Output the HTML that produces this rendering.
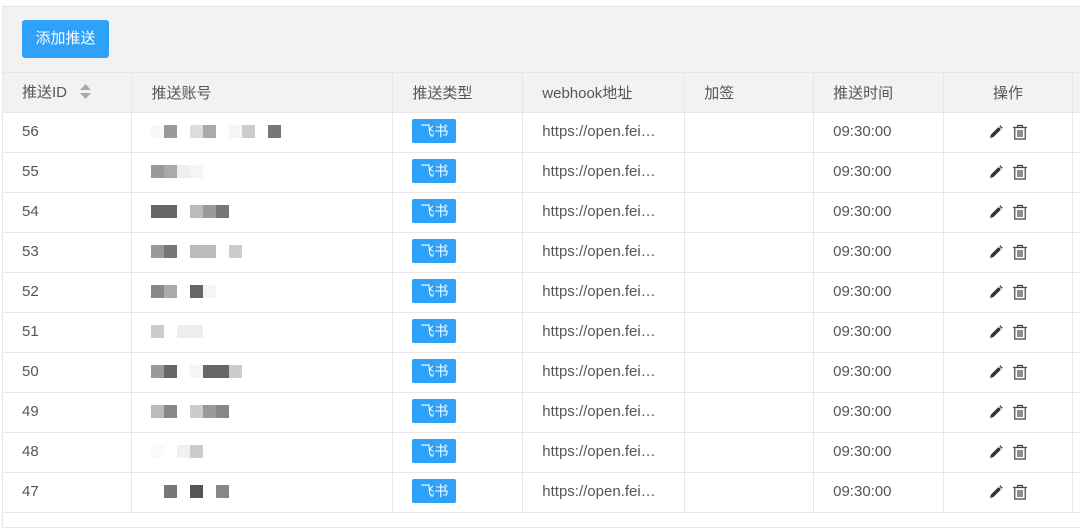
<!DOCTYPE html>
<html><head><meta charset="utf-8"><style>
body{margin:0;width:1080px;height:512px;overflow:hidden;background:#fff;font-family:"Liberation Sans","Noto Sans CJK SC",sans-serif;font-size:15px;color:#555}
.wrap{position:absolute;left:2px;top:6px;width:1090px;height:520px;border:1px solid #e6e6e6;background:#fff}
.bar{height:65px;background:#f2f2f2;position:relative}
.btn{position:absolute;left:19px;top:13px;width:87px;height:38px;background:#2ea1f8;border-radius:3px;color:#fff;font-size:15px;line-height:38px;text-align:center}
table{border-collapse:collapse;table-layout:fixed;position:absolute;left:0;top:65px}
td,th{height:39px;border:1px solid #e6e6e6;padding:0 0 0 19px;text-align:left;font-weight:normal;white-space:nowrap;overflow:hidden}
td{padding-bottom:3px;height:36px}
th{background:#f2f2f2;color:#555;font-size:15px}
tr td:first-child,tr th:first-child{border-left:none}
.tag{display:inline-block;background:#2ea1f8;color:#fff;font-size:14px;width:44px;text-align:center;height:24px;line-height:24px;border-radius:2px}
.op{text-align:center;padding:0 0 3px 0}
.b{display:inline-block;width:13px;height:13px;vertical-align:middle}
.sort{display:inline-block;vertical-align:middle;margin-left:12px}
</style></head><body>
<div class="wrap">
<div class="bar"><div class="btn">添加推送</div></div>
<table>
<colgroup><col style="width:129px"><col style="width:261px"><col style="width:130px"><col style="width:162px"><col style="width:129px"><col style="width:130px"><col style="width:129px"><col style="width:20px"></colgroup>
<tr><th>推送ID<span class="sort"><svg width="13" height="17" viewBox="0 0 13 17"><path d="M6.5 1L12 7H1Z" fill="#aaa"/><path d="M6.5 16L12 10H1Z" fill="#aaa"/></svg></span></th><th>推送账号</th><th>推送类型</th><th>webhook地址</th><th>加签</th><th>推送时间</th><th style="text-align:center;padding:0">操作</th><th></th></tr>
</table>
</div>
<script>
var ids=[56,55,54,53,52,51,50,49,48,47];
var pats=["#f8f8f8 #999 #fff #ddd #aaa #fff #f5f5f5 #ccc #fff #777","#999 #aaa #eee #f5f5f5","#666 #666 #fff #bbb #999 #777","#999 #777 #fff #bbb #bbb #fff #ccc","#888 #aaa #fff #666 #f5f5f5","#ccc #fff #eee #eee","#999 #666 #fff #f5f5f5 #666 #666 #ccc","#bbb #888 #fff #ccc #999 #888","#fafafa #fff #f0f0f0 #ccc","#fff #777 #fff #555 #fff #888"];
var h="";
ids.forEach(function(id,i){
var bl=pats[i].split(" ").map(function(c){return '<span class="b" style="background:'+c+'"></span>'}).join("");
h+='<tr><td>'+id+'</td><td>'+bl+'</td><td><span class="tag">飞书</span></td><td>https://open.fei…</td><td></td><td>09:30:00</td><td class="op"><svg width="14" height="14" viewBox="0 0 14 14" style="vertical-align:middle;margin-right:9px"><path d="M1 13L2 9.5L9.5 2L12 4.5L4.5 12Z" fill="#333"/><path d="M10.3 1.2L11.2 .3L13.7 2.8L12.8 3.7Z" fill="#333"/></svg><svg width="16" height="16" viewBox="0 0 16 16" style="vertical-align:middle"><path d="M1 3.5H15M5.5 3.5V1.5H10.5V3.5M2.8 3.5V15H13.2V3.5M6 6V13M8 6V13M10 6V13" stroke="#444" stroke-width="1.2" fill="none"/></svg></td><td></td></tr>';
});
document.querySelector("table").insertAdjacentHTML("beforeend",h);
</script>
</body></html>
